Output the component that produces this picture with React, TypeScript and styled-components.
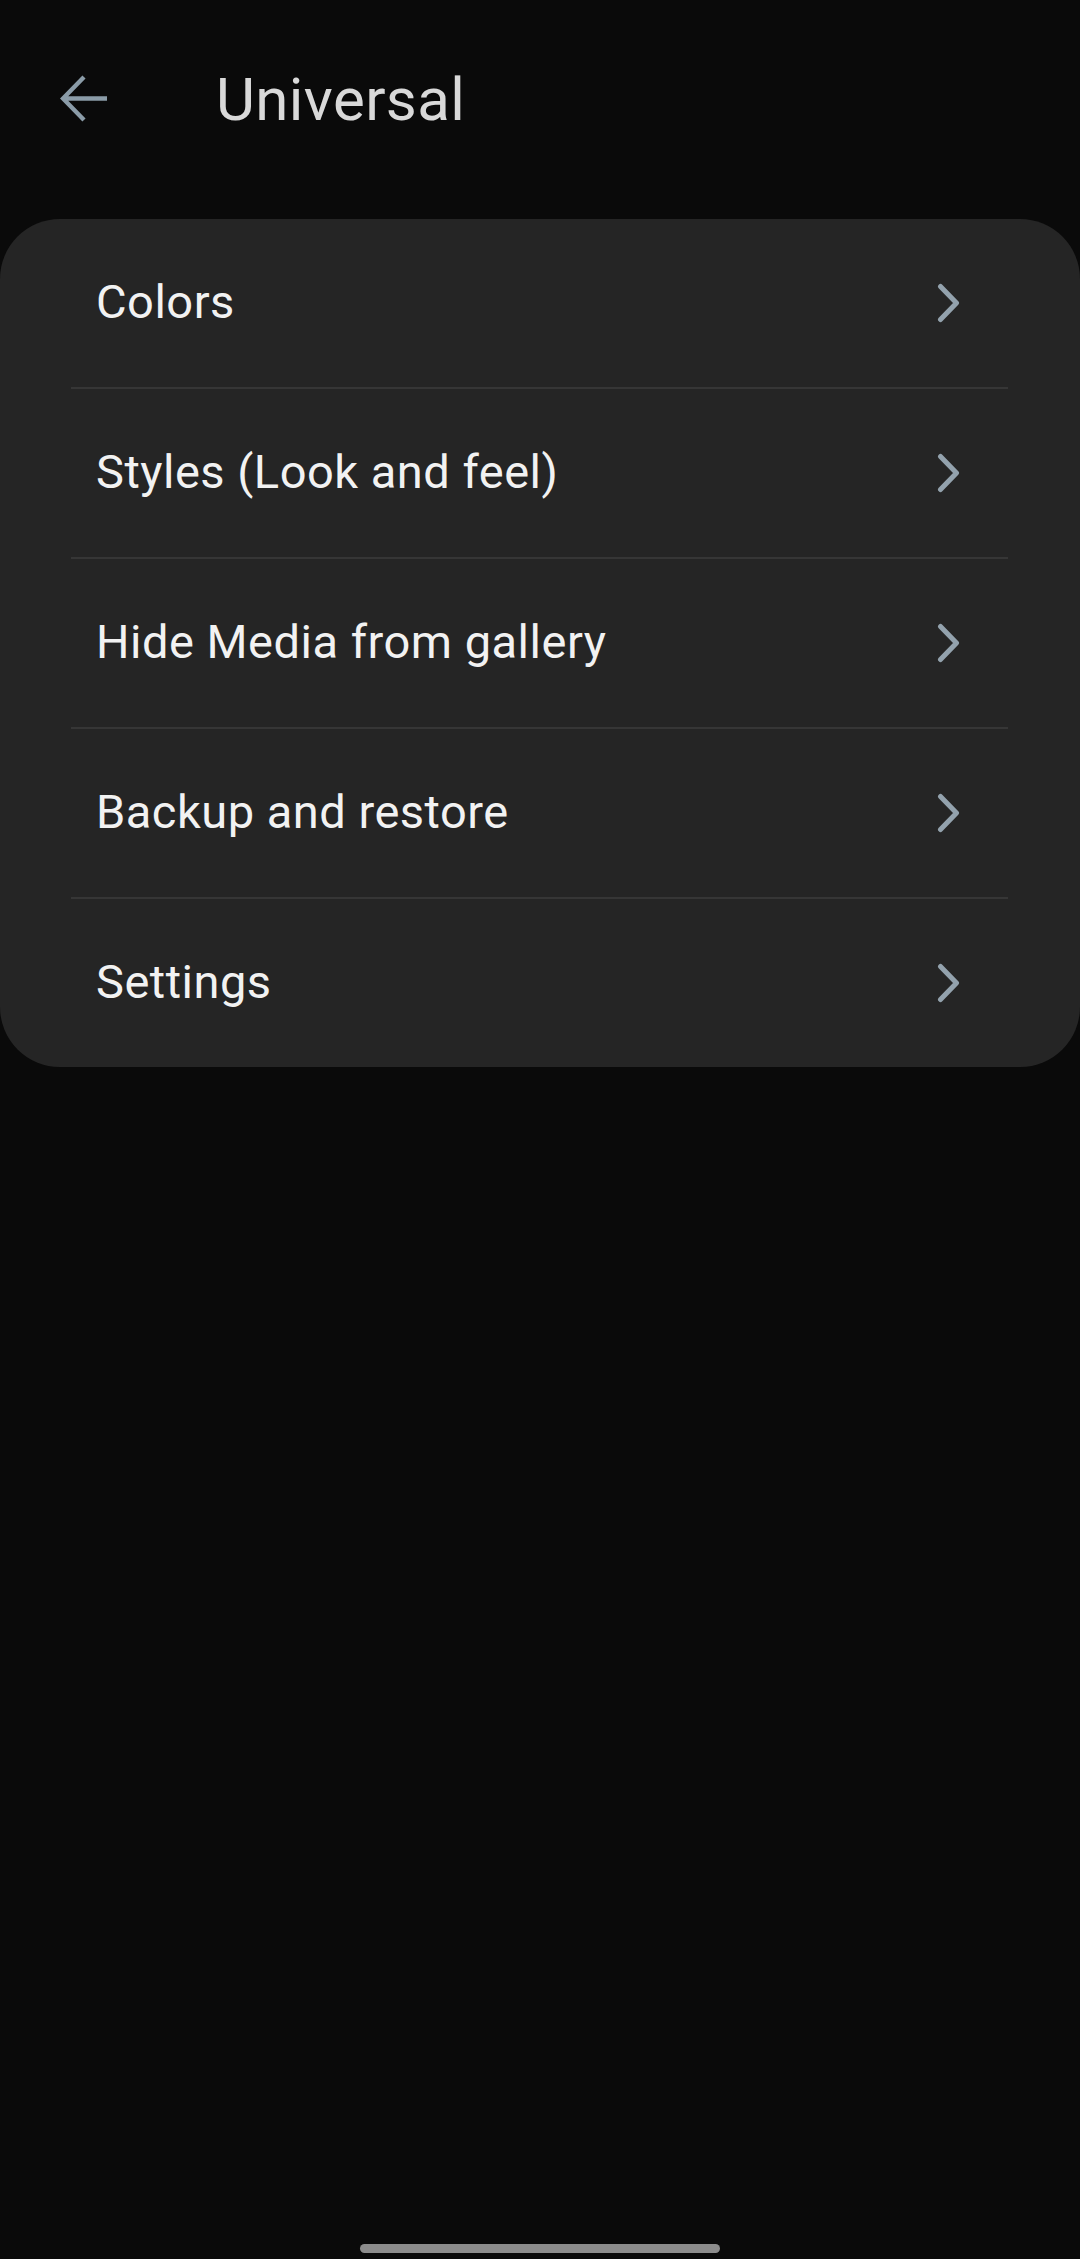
import { createGlobalStyle, styled } from "styled-components";

const GlobalStyle = createGlobalStyle`
  html, body {
    margin: 0;
    padding: 0;
    background: #0a0a0a;
  }
  body {
    font-family: Roboto, "Noto Sans", "Liberation Sans", sans-serif;
    -webkit-font-smoothing: antialiased;
  }
`;

const items = [
  "Colors",
  "Styles (Look and feel)",
  "Hide Media from gallery",
  "Backup and restore",
  "Settings",
];

export default function App() {
  return (
    <Page>
      <GlobalStyle />
      <Header>
        <BackButton aria-label="Back">
          <svg width="48" height="48" viewBox="0 0 48 48" fill="none">
            <path
              d="M3 23.5H47M24 2L3 23.5L24 45"
              stroke="#8b9ca8"
              strokeWidth="4.4"
            />
          </svg>
        </BackButton>
        <Title>Universal</Title>
      </Header>

      <Card>
        {items.map((label, i) => (
          <div key={label}>
            {i > 0 && <Divider />}
            <Row>
              <Label>{label}</Label>
              <svg width="26" height="40" viewBox="0 0 26 40" fill="none">
                <path
                  d="M4.5 3.5L20.5 20L4.5 36.5"
                  stroke="#93a2ad"
                  strokeWidth="5"
                  strokeLinecap="round"
                  strokeLinejoin="round"
                />
              </svg>
            </Row>
          </div>
        ))}
      </Card>

      <HomeBar />
    </Page>
  );
}

const Page = styled.div`
  min-height: 2259px;
  display: flex;
  flex-direction: column;
  background: #0a0a0a;
`;

const Header = styled.header`
  height: 198px;
  display: flex;
  align-items: center;
  padding-left: 60px;
  margin-bottom: 21px;
`;

const BackButton = styled.button`
  width: 48px;
  height: 48px;
  padding: 0;
  border: none;
  background: none;
  display: flex;
  align-items: center;
  justify-content: center;
`;

const Title = styled.h1`
  margin: 0 0 0 108px;
  font-size: 60px;
  font-weight: 400;
  letter-spacing: 0.4px;
  color: #d9d9d9;
`;

const Card = styled.section`
  background: #252525;
  border-radius: 60px;
  overflow: hidden;
`;

const Row = styled.div`
  height: 168px;
  box-sizing: border-box;
  display: flex;
  align-items: center;
  justify-content: space-between;
  padding: 0 118px 0 96px;
`;

const Label = styled.span`
  font-size: 47px;
  letter-spacing: 0.5px;
  color: #f2f2f2;
  margin-bottom: 3px;
`;

const Divider = styled.div`
  height: 2px;
  margin: 0 72px 0 71px;
  background: #363636;
`;

const HomeBar = styled.div`
  width: 360px;
  height: 9px;
  border-radius: 5px;
  background: #8c8c8c;
  margin: auto auto 6px;
`;
